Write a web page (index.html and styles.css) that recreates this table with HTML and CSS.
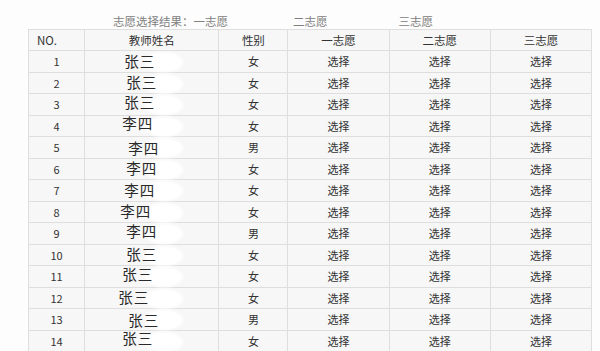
FILE: index.html
```html
<!DOCTYPE html>
<html lang="zh">
<head>
<meta charset="utf-8">
<link rel="stylesheet" href="styles.css">
</head>
<body>
<div class="page">
  <div class="legend">
    <span class="legend-label">志愿选择结果：</span><span class="legend-item first">一志愿</span><span class="legend-item second">二志愿</span><span class="legend-item third">三志愿</span>
  </div>
  <table class="grid">
    <colgroup>
      <col class="c-no"><col class="c-name"><col class="c-sex"><col class="c-v"><col class="c-v"><col class="c-v">
    </colgroup>
    <thead>
      <tr><th class="no">NO.</th><th>教师姓名</th><th>性别</th><th>一志愿</th><th>二志愿</th><th>三志愿</th></tr>
    </thead>
    <tbody>
      <tr><td>1</td><td class="name"><span class="nm">张三</span></td><td>女</td><td>选择</td><td>选择</td><td>选择</td></tr>
      <tr><td>2</td><td class="name"><span class="nm r1">张三</span></td><td>女</td><td>选择</td><td>选择</td><td>选择</td></tr>
      <tr><td>3</td><td class="name"><span class="nm up">张三</span></td><td>女</td><td>选择</td><td>选择</td><td>选择</td></tr>
      <tr><td>4</td><td class="name"><span class="nm l1 up">李四</span></td><td>女</td><td>选择</td><td>选择</td><td>选择</td></tr>
      <tr><td>5</td><td class="name"><span class="nm r2 down">李四</span></td><td>男</td><td>选择</td><td>选择</td><td>选择</td></tr>
      <tr><td>6</td><td class="name"><span class="nm r1">李四</span></td><td>女</td><td>选择</td><td>选择</td><td>选择</td></tr>
      <tr><td>7</td><td class="name"><span class="nm">李四</span></td><td>女</td><td>选择</td><td>选择</td><td>选择</td></tr>
      <tr><td>8</td><td class="name"><span class="nm l2">李四</span></td><td>女</td><td>选择</td><td>选择</td><td>选择</td></tr>
      <tr><td>9</td><td class="name"><span class="nm r1 up">李四</span></td><td>男</td><td>选择</td><td>选择</td><td>选择</td></tr>
      <tr><td>10</td><td class="name"><span class="nm r1">张三</span></td><td>女</td><td>选择</td><td>选择</td><td>选择</td></tr>
      <tr><td>11</td><td class="name"><span class="nm l1 up">张三</span></td><td>女</td><td>选择</td><td>选择</td><td>选择</td></tr>
      <tr><td>12</td><td class="name"><span class="nm l3">张三</span></td><td>女</td><td>选择</td><td>选择</td><td>选择</td></tr>
      <tr><td>13</td><td class="name"><span class="nm r2 down">张三</span></td><td>男</td><td>选择</td><td>选择</td><td>选择</td></tr>
      <tr><td>14</td><td class="name"><span class="nm l1 up">张三</span></td><td>女</td><td>选择</td><td>选择</td><td>选择</td></tr>
    </tbody>
  </table>
</div>
</body>
</html>
```
FILE: styles.css
```css
html, body {
  margin: 0;
  padding: 0;
  background: #fdfdfd;
}
body {
  font-family: "Noto Sans CJK SC", "Noto Sans", sans-serif;
  color: #333;
  overflow: hidden;
}
.page {
  padding: 13px 0 0 28px;
}
.legend {
  height: 16px;
  line-height: 16px;
  font-size: 11.5px;
  color: #808080;
  padding-left: 85px;
  white-space: nowrap;
}
.legend-item.first { margin-left: 0; }
.legend-item.second { margin-left: 65px; }
.legend-item.third { margin-left: 71px; }
.grid {
  border-collapse: collapse;
  table-layout: fixed;
  width: 564px;
  background: #f7f7f7;
  font-size: 11px;
}
.c-no { width: 56px; }
.c-name { width: 134px; }
.c-sex { width: 69px; }
.c-v { width: 101px; }
.grid th, .grid td {
  border: 1px solid #dedede;
  text-align: center;
  height: 20.5px;
  padding: 0;
  font-weight: normal;
  color: #333;
  white-space: nowrap;
}
.grid th { height: 20px; font-size: 11.5px; }
.grid th.no { text-align: left; padding-left: 8px; }
.grid td.name {
  position: relative;
}
.nm {
  position: relative;
  display: inline-block;
  font-size: 14.5px;
  line-height: 15px;
  letter-spacing: 1px;
  color: #2a2a2a;
  left: -12px;
  z-index: 1;
}
.name::after {
  content: "";
  position: absolute;
  left: 60px;
  top: 1px;
  width: 38px;
  height: 20px;
  border-radius: 50%;
  background: #ffffff;
  filter: blur(1.5px);
}
.nm.r1 { left: -10px; }
.nm.r2 { left: -8px; }
.nm.l1 { left: -14px; }
.nm.l2 { left: -16px; }
.nm.l3 { left: -18px; }
.nm.up { top: -2px; }
.nm.down { top: 1px; }
```
